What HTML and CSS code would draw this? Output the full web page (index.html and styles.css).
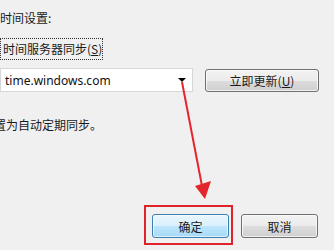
FILE: index.html
```html
<!DOCTYPE html>
<html lang="zh-CN">
<head>
  <meta charset="UTF-8" />
  <title>时间设置</title>
  <link rel="stylesheet" href="styles.css">
</head>
<body>

<div class="panel">
  <div class="title">时间设置:</div>

  <div class="check-row">
    <span class="focus-label">时间服务器同步(<u>S</u>)</span>
  </div>

  <div class="sync-row">
    <div class="combo">
      <span class="combo-text">time.windows.com</span>
      <span class="combo-arrow"></span>
    </div>
    <button class="btn btn-update">立即更新(<u>U</u>)</button>
  </div>

  <div class="note">置为自动定期同步。</div>

  <div class="actions">
    <div class="highlight">
      <button class="btn btn-default">确定</button>
    </div>
    <button class="btn btn-cancel">取消</button>
  </div>
</div>

<!-- 红色箭头标注 -->
<svg class="annotation" width="334" height="250" viewBox="0 0 334 250">
  <line x1="182" y1="82" x2="202" y2="186" stroke="#e3262c" stroke-width="2"/>
  <polygon points="195,186 211,181 205,199" fill="#e3262c"/>
</svg>

</body>
</html>
```

FILE: styles.css
```css
body {
    margin: 0;
    width: 334px;
    height: 250px;
    overflow: hidden;
    position: relative;
    background: #f0f0f0;
    font-family: "Noto Sans CJK SC", "Microsoft YaHei", sans-serif;
    font-size: 12px;
    color: #1a1a1a;
}

.panel {
    display: flex;
    flex-direction: column;
    padding-top: 10px;
}

.title {
    line-height: 16px;
    height: 16px;
}

/* 复选框文字 + 焦点虚线框 */
.check-row {
    margin-top: 12px;
    display: flex;
}

.focus-label {
    border: 1px dotted #333;
    padding: 2px 0 2px 2px;
    line-height: 16px;
}

.sync-row {
    display: flex;
    align-items: flex-start;
    margin-top: 8px;
    gap: 12px;
}

.combo {
    width: 193px;
    height: 24px;
    box-sizing: border-box;
    background: #fff;
    border: 1px solid #d5d7db;
    display: flex;
    align-items: center;
    justify-content: space-between;
    padding: 0 6px 0 4px;
}

.combo-text {
    font-family: "Noto Sans", "DejaVu Sans", sans-serif;
    font-size: 12px;
    color: #111;
}

.combo-arrow {
    width: 0;
    height: 0;
    border-left: 4px solid transparent;
    border-right: 4px solid transparent;
    border-top: 4px solid #000;
}

/* Win7 风格按钮 */
.btn {
    font-family: inherit;
    font-size: 12px;
    color: #1a1a1a;
    height: 24px;
    box-sizing: border-box;
    border: 1px solid #707070;
    border-radius: 3px;
    padding: 0;
    background: linear-gradient(#f2f2f2 0%, #ebebeb 50%, #dddddd 51%, #cfcfcf 100%);
    box-shadow: inset 0 0 0 1px rgba(255, 255, 255, 0.7);
}

.btn-update {
    width: 114px;
    height: 23px;
    margin-top: 1px;
}

.note {
    margin-top: 25px;
    margin-left: -6px;
    line-height: 16px;
}

.actions {
    display: flex;
    align-items: flex-start;
    margin-top: 72px;
    padding-left: 144px;
}

.highlight {
    border: 2px solid #e0232a;
    padding: 7px 2px 5px 6px;
}

.btn-default {
    width: 77px;
    border-color: #3c7fb1;
    background: linear-gradient(#eaf6fd 0%, #d9f0fc 50%, #bee6fd 51%, #a7d9f5 100%);
    box-shadow: inset 0 0 0 1px rgba(255, 255, 255, 0.6);
}

.btn-cancel {
    width: 77px;
    margin-left: 8px;
    margin-top: 9px;
}

.annotation {
    position: absolute;
    left: 0;
    top: 0;
    pointer-events: none;
}
```
